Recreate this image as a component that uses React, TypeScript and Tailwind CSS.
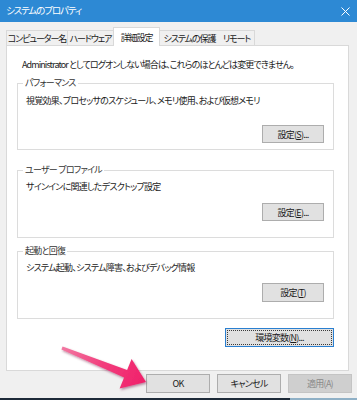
import React from "react";

const font = {
  fontFamily: '"Noto Sans CJK JP", "Noto Sans", sans-serif',
};

function Btn({
  children,
  className = "",
  variant = "normal",
}: {
  children: React.ReactNode;
  className?: string;
  variant?: "normal" | "focus" | "disabled";
}) {
  if (variant === "focus") {
    return (
      <div
        className={`flex items-center justify-center border border-[#2a7fd0] bg-[#e1e1e1] p-[1px] ${className}`}
      >
        <div className="flex h-full w-full items-center justify-center whitespace-nowrap border border-dotted border-[#3a3a3a] text-[9px] leading-none text-[#1a1a1a]">
          {children}
        </div>
      </div>
    );
  }
  if (variant === "disabled") {
    return (
      <div
        className={`flex items-center justify-center whitespace-nowrap border border-[#c4c4c4] bg-[#cfcfcf] text-[9px] leading-none text-[#8a8a8a] ${className}`}
      >
        {children}
      </div>
    );
  }
  return (
    <div
      className={`flex items-center justify-center whitespace-nowrap border border-[#adadad] bg-[#e1e1e1] text-[9px] leading-none text-[#1a1a1a] ${className}`}
    >
      {children}
    </div>
  );
}

function Group({
  legend,
  desc,
  button,
  className,
  descClass,
  btnClass,
}: {
  legend: string;
  desc: string;
  button: React.ReactNode;
  className: string;
  descClass: string;
  btnClass: string;
}) {
  return (
    <div className={`relative border border-[#dcdcdc] ${className}`}>
      <span className="absolute -top-[7px] left-[5px] whitespace-nowrap bg-white px-[2px] text-[9px] leading-[12px] text-[#333]">
        {legend}
      </span>
      <div className={`whitespace-nowrap pl-[8px] text-[9px] leading-[12px] text-[#222] ${descClass}`}>
        {desc}
      </div>
      <div className={`flex justify-end pr-[9px] ${btnClass}`}>{button}</div>
    </div>
  );
}

const tabs = [
  { label: "コンピューター名", w: "w-[61px]" },
  { label: "ハードウェア", w: "w-[46px]" },
  { label: "詳細設定", w: "w-[47px]", active: true },
  { label: "システムの保護", w: "w-[59px]" },
  { label: "リモート", w: "w-[36px]" },
];

export default function App() {
  return (
    <div
      className="relative flex h-[400px] w-[357px] flex-col overflow-hidden bg-[#f0f0f0] tracking-[-0.75px] [font-feature-settings:'palt']"
      style={font}
    >
      {/* Title bar */}
      <div className="flex h-[22px] shrink-0 items-center justify-between bg-[#2d89d4] pl-[6px] pr-[6px] text-white">
        <span className="whitespace-nowrap text-[9.5px] leading-none tracking-[-1.1px]">
          システムのプロパティ
        </span>
        <svg width="9" height="9" viewBox="0 0 9 9" className="mr-[1px]">
          <path d="M0.5 0.5 L8.5 8.5 M8.5 0.5 L0.5 8.5" stroke="#ffffff" strokeWidth="1" />
        </svg>
      </div>

      {/* Tabs */}
      <div className="mt-[5px] flex h-[18px] shrink-0 items-end pl-[6px] tracking-[-1.1px]">
        {tabs.map((t, i) =>
          t.active ? (
            <div
              key={i}
              className={`relative z-10 -mb-[1px] flex h-[19px] items-center justify-center whitespace-nowrap border-l border-r border-t border-[#d9d9d9] bg-white text-[9px] leading-none text-[#1a1a1a] ${t.w}`}
            >
              {t.label}
            </div>
          ) : (
            <div
              key={i}
              className={`flex h-[15px] items-center justify-center whitespace-nowrap border-t border-[#d9d9d9] bg-[#f0f0f0] text-[9px] leading-none text-[#1a1a1a] ${
                i === 0 || i === 1 ? "border-l" : ""
              } ${i === tabs.length - 1 ? "border-r" : ""} ${t.w}`}
            >
              {t.label}
            </div>
          )
        )}
      </div>

      {/* Panel */}
      <div className="ml-[6px] flex h-[326px] w-[343px] shrink-0 flex-col border border-[#d9d9d9] bg-white pl-[10px] pr-[14px] pt-[13px]">
        <div className="whitespace-nowrap pl-[5px] text-[9px] leading-[12px] tracking-[-0.9px] text-[#1a1a1a]">
          Administrator としてログオンしない場合は、これらのほとんどは変更できません。
        </div>

        <Group
          className="mt-[12px] h-[67px]"
          legend="パフォーマンス"
          desc="視覚効果、プロセッサのスケジュール、メモリ使用、および仮想メモリ"
          descClass="pt-[11px]"
          btnClass="mt-[18px]"
          button={<Btn className="h-[18px] w-[62px]">設定(<u>S</u>)...</Btn>}
        />

        <Group
          className="mt-[20px] h-[68px]"
          legend="ユーザー プロファイル"
          desc="サインインに関連したデスクトップ設定"
          descClass="pt-[10px]"
          btnClass="mt-[10px]"
          button={<Btn className="h-[18px] w-[62px]">設定(<u>E</u>)...</Btn>}
        />

        <Group
          className="mt-[13px] h-[68px]"
          legend="起動と回復"
          desc="システム起動、システム障害、およびデバッグ情報"
          descClass="pt-[10px]"
          btnClass="mt-[9px]"
          button={<Btn className="h-[19px] w-[62px]">設定(<u>T</u>)</Btn>}
        />

        <div className="mt-[9px] flex justify-end">
          <Btn variant="focus" className="h-[19px] w-[109px]">
            環境変数(<u>N</u>)...
          </Btn>
        </div>
      </div>

      {/* Bottom buttons */}
      <div className="mt-[3px] flex shrink-0 gap-[7px] pl-[146px]">
        <Btn className="h-[19px] w-[64px]">OK</Btn>
        <Btn className="h-[19px] w-[64px]">キャンセル</Btn>
        <Btn variant="disabled" className="h-[19px] w-[64px]">
          適用(A)
        </Btn>
      </div>

      <div className="mt-auto flex h-[2px] shrink-0">
        <div className="w-[290px] bg-[#1d2a38]" />
        <div className="flex-1 bg-[#8fb0c6]" />
      </div>

      {/* Arrow overlay */}
      <svg
        className="pointer-events-none absolute left-0 top-0"
        width="357"
        height="400"
        viewBox="0 0 357 400"
      >
        <defs>
          <linearGradient id="ag" x1="60" y1="348" x2="146" y2="382" gradientUnits="userSpaceOnUse">
            <stop offset="0" stopColor="#f27aa3" />
            <stop offset="0.5" stopColor="#f23d7c" />
            <stop offset="1" stopColor="#f0206a" />
          </linearGradient>
          <filter id="sh" x="-20%" y="-20%" width="140%" height="140%">
            <feDropShadow dx="1" dy="1.5" stdDeviation="1" floodColor="#6b0f30" floodOpacity="0.45" />
          </filter>
        </defs>
        <polygon
          points="62.6,346.6 127.1,370 131.6,358.9 146,382 119.6,388.5 124.1,377.4 61.4,349.4"
          fill="url(#ag)"
          filter="url(#sh)"
        />
      </svg>
    </div>
  );
}
